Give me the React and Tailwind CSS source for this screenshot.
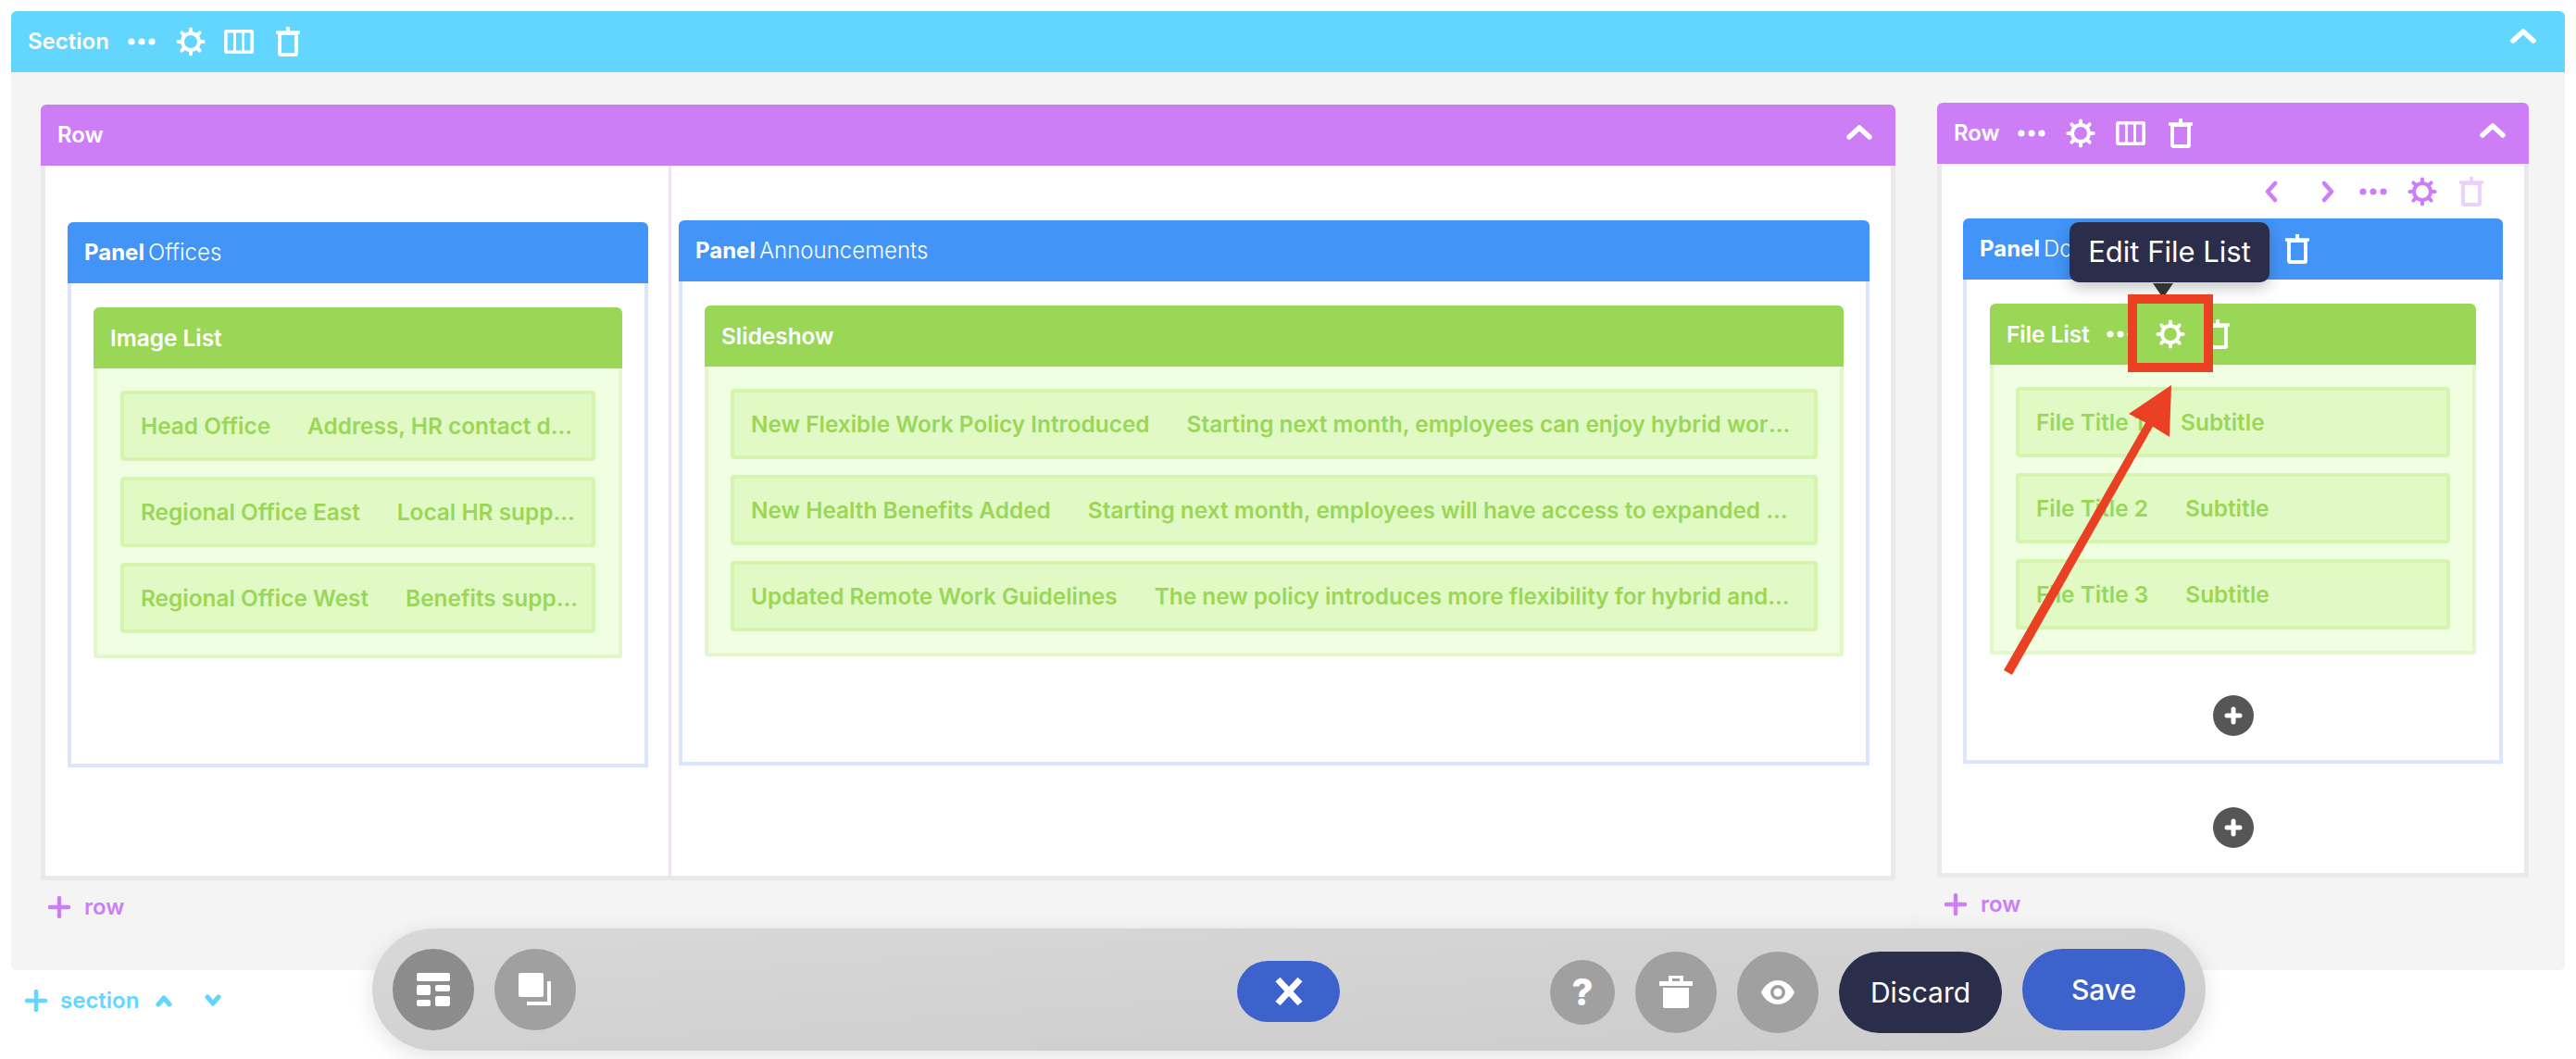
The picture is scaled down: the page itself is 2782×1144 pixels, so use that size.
const font = { fontFamily: "Inter, 'Liberation Sans', sans-serif" };

function Gear({ className = "text-white" }) {
  const teeth = [0, 45, 90, 135, 180, 225, 270, 315];
  return (
    <svg viewBox="0 0 32 32" className={`w-[32px] h-[32px] ${className}`} fill="none" stroke="currentColor">
      <circle cx="16" cy="16" r="9" strokeWidth="4" />
      {teeth.map((a) => (
        <line key={a} x1="16" y1="5" x2="16" y2="2.4" strokeWidth="4" strokeLinecap="round" transform={`rotate(${a} 16 16)`} />
      ))}
    </svg>
  );
}

function Columns() {
  return (
    <svg viewBox="0 0 32 26" className="w-[32px] h-[26px] text-white" fill="none" stroke="currentColor" strokeWidth="3.6">
      <rect x="1.8" y="1.8" width="28.4" height="22.4" rx="1" />
      <line x1="11.5" y1="2" x2="11.5" y2="24" strokeWidth="2.8" />
      <line x1="20.5" y1="2" x2="20.5" y2="24" strokeWidth="2.8" />
    </svg>
  );
}

function Trash({ className = "text-white" }) {
  return (
    <svg viewBox="0 0 26 32" className={`w-[26px] h-[32px] ${className}`} fill="none" stroke="currentColor">
      <rect x="4" y="7" width="18" height="23" rx="1" strokeWidth="3.8" />
      <line x1="0.5" y1="6" x2="25.5" y2="6" strokeWidth="3.4" strokeLinecap="round" />
      <line x1="13" y1="1" x2="13" y2="5" strokeWidth="4" strokeLinecap="round" />
    </svg>
  );
}

function Dots({ className = "text-white" }) {
  return (
    <svg viewBox="0 0 30 8" className={`w-[30px] h-[8px] ${className}`} fill="currentColor">
      <circle cx="4" cy="4" r="3.6" />
      <circle cx="15" cy="4" r="3.6" />
      <circle cx="26" cy="4" r="3.6" />
    </svg>
  );
}

function Up() {
  return (
    <svg viewBox="0 0 28 16" className="w-[28px] h-[16px] text-white" fill="none" stroke="currentColor" strokeWidth="5.5" strokeLinecap="round" strokeLinejoin="round">
      <path d="M3 13 L14 3 L25 13" />
    </svg>
  );
}

function Plus({ className }) {
  return (
    <svg viewBox="0 0 24 24" className={`w-[24px] h-[24px] ${className}`} fill="none" stroke="currentColor" strokeWidth="4.4" strokeLinecap="round">
      <path d="M12 2 V22 M2 12 H22" />
    </svg>
  );
}

function Chevron({ d }) {
  return (
    <svg viewBox="0 0 18 14" className="w-[18px] h-[14px] text-[#63d6ff]" fill="none" stroke="currentColor" strokeWidth="5" strokeLinecap="round" strokeLinejoin="round">
      <path d={d} />
    </svg>
  );
}

function SideChevron({ d }) {
  return (
    <svg viewBox="0 0 14 24" className="w-[14px] h-[24px] text-[#cd7ef6]" fill="none" stroke="currentColor" strokeWidth="4.5" strokeLinecap="round" strokeLinejoin="round">
      <path d={d} />
    </svg>
  );
}

function Item({ title, sub, end }) {
  return (
    <div className={`h-[76px] flex items-center rounded-[4px] border-[4px] border-[#d5f4ae] bg-[#e1f9c5] pl-[18px] ${end} text-[24.4px] font-semibold text-[#9bd757] whitespace-nowrap`}>
      <span className="shrink-0">{title}</span>
      <span className="ml-[40px] truncate min-w-0">{sub}</span>
    </div>
  );
}

function Block({ title, items, pad = "px-[24px]", end = "pr-[22px]", children }) {
  return (
    <div>
      <div className="h-[66px] rounded-t-[6px] bg-[#9bd757] flex items-center pl-[18px] text-[24.4px] font-semibold text-white">
        {title}
        {children}
      </div>
      <div className={`border-[4px] border-t-0 border-[#e3f7cd] rounded-b-[4px] bg-[#f0ffe2] ${pad} pt-[24px] pb-[23px] flex flex-col gap-[17px]`}>
        {items.map((it) => (
          <Item key={it[0]} title={it[0]} sub={it[1]} end={end} />
        ))}
      </div>
    </div>
  );
}

function PanelHead({ name, children }) {
  return (
    <div className="h-[66px] rounded-t-[6px] bg-[#4294f8] flex items-center pl-[18px] text-[24px] text-white whitespace-nowrap">
      <span className="font-bold">Panel</span>
      <span className="ml-[4px] font-light">{name}</span>
      {children}
    </div>
  );
}

function AddCircle() {
  return (
    <div className="w-[44px] h-[44px] rounded-full bg-[#565656] flex items-center justify-center">
      <svg viewBox="0 0 20 20" className="w-[20px] h-[20px] text-white" fill="none" stroke="currentColor" strokeWidth="5" strokeLinecap="round">
        <path d="M10 3 V17 M3 10 H17" />
      </svg>
    </div>
  );
}

function AddRow() {
  return (
    <div className="flex items-center gap-[15px] h-[58px] pl-[8px] text-[24px] font-semibold text-[#cd7ef6]">
      <Plus className="text-[#cd7ef6]" />
      <span>row</span>
    </div>
  );
}

export default function App() {
  return (
    <div style={font} className="relative w-[2782px] h-[1144px] overflow-hidden bg-white">
      <div className="pt-[12px] px-[12px]">
        {/* Section */}
        <div className="h-[66px] rounded-t-[6px] bg-[#63d6ff] flex items-center pl-[18px] pr-[31px] text-[24px] font-semibold text-white">
          <span>Section</span>
          <Dots className="ml-[20px] text-white" />
          <div className="ml-[22px]"><Gear /></div>
          <div className="ml-[20px]"><Columns /></div>
          <div className="ml-[24px]"><Trash /></div>
          <div className="ml-auto -mt-[12px]"><Up /></div>
        </div>
        <div className="h-[970px] flex bg-[#f4f4f4] rounded-b-[6px]">
          {/* left column */}
          <div className="w-[2059px] shrink-0 pl-[32px] pr-[19px] pt-[35px] border-r-[5px] border-[#f0f4f6]">
            <div className="h-[66px] rounded-t-[6px] bg-[#cd7ef6] flex items-center pl-[18px] pr-[25px] text-[24px] font-semibold text-white">
              <span>Row</span>
              <div className="ml-auto -mt-[6px]"><Up /></div>
            </div>
            <div className="h-[772px] flex border-[5px] border-t-0 border-[#e9e9e9] bg-white rounded-b-[4px]">
              <div className="w-[676px] shrink-0 border-r-[3px] border-[#efe3fa] pl-[24px] pr-[22px] pt-[61px]">
                <PanelHead name="Offices" />
                <div className="h-[523px] border-[4px] border-t-0 border-[#d9e6fb] px-[24px] pt-[26px] bg-white">
                  <Block
                    title="Image List"
                    pad="px-[25px]"
                    end="pr-[15px]"
                    items={[
                      ["Head Office", "Address, HR contact details and office hours"],
                      ["Regional Office East", "Local HR support and benefits"],
                      ["Regional Office West", "Benefits support and local HR"],
                    ]}
                  />
                </div>
              </div>
              <div className="flex-1 min-w-0 pl-[8px] pr-[23px] pt-[59px]">
                <PanelHead name="Announcements" />
                <div className="h-[523px] border-[4px] border-t-0 border-[#d9e6fb] px-[24px] pt-[26px] bg-white">
                  <Block
                    title="Slideshow"
                    items={[
                      ["New Flexible Work Policy Introduced", "Starting next month, employees can enjoy hybrid work arrangements from home and office"],
                      ["New Health Benefits Added", "Starting next month, employees will have access to expanded health and dental coverage"],
                      ["Updated Remote Work Guidelines", "The new policy introduces more flexibility for hybrid and remote work across all teams"],
                    ]}
                  />
                </div>
              </div>
            </div>
            <AddRow />
          </div>

          {/* right column */}
          <div className="flex-1 min-w-0 pl-[21px] pr-[39px] pt-[33px]">
            <div className="h-[66px] rounded-t-[6px] bg-[#cd7ef6] flex items-center pl-[18px] pr-[25px] text-[24px] font-semibold text-white">
              <span>Row</span>
              <Dots className="ml-[19px] text-white" />
              <div className="ml-[22px]"><Gear /></div>
              <div className="ml-[22px]"><Columns /></div>
              <div className="ml-[25px]"><Trash /></div>
              <div className="ml-auto -mt-[6px]"><Up /></div>
            </div>
            <div className="h-[771px] border-[5px] border-t-0 border-[#e9e9e9] bg-white rounded-b-[4px] px-[23px]">
              <div className="h-[59px] flex items-center pr-[21px]">
                <div className="ml-auto"><SideChevron d="M11 3 L3 12 L11 21" /></div>
                <div className="ml-[47px]"><SideChevron d="M3 3 L11 12 L3 21" /></div>
                <Dots className="ml-[27px] text-[#cd7ef6]" />
                <div className="ml-[22px]"><Gear className="text-[#cd7ef6]" /></div>
                <div className="ml-[24px]"><Trash className="text-[#ead0fb]" /></div>
              </div>
              <PanelHead name="Documents">
                <div className="ml-[134px]"><Trash /></div>
              </PanelHead>
              <div className="h-[523px] border-[4px] border-t-0 border-[#d9e6fb] px-[25px] pt-[26px] bg-white">
                <Block
                  title="File List"
                  items={[
                    ["File Title 1", "Subtitle"],
                    ["File Title 2", "Subtitle"],
                    ["File Title 3", "Subtitle"],
                  ]}
                >
                  <Dots className="ml-[18px] text-white" />
                  <div className="ml-[23px]"><Gear /></div>
                  <div className="ml-[22px]"><Trash /></div>
                </Block>
                <div className="mt-[44px] flex justify-center"><AddCircle /></div>
              </div>
              <div className="mt-[47px] flex justify-center"><AddCircle /></div>
            </div>
            <AddRow />
          </div>
        </div>

        {/* add section */}
        <div className="h-[66px] flex items-center pl-[15px] text-[24px] font-semibold text-[#63d6ff]">
          <Plus className="text-[#63d6ff]" />
          <span className="ml-[14px]">section</span>
          <div className="ml-[18px]"><Chevron d="M3 11 L9 4 L15 11" /></div>
          <div className="ml-[35px]"><Chevron d="M3 3 L9 10 L15 3" /></div>
        </div>
      </div>

      {/* tooltip */}
      <div className="absolute left-[2235px] top-[240px] w-[216px] h-[65px] rounded-[10px] bg-[#2b2e4a] shadow-[0_6px_16px_rgba(0,0,0,0.22)] flex items-center justify-center text-[31px] text-white whitespace-nowrap">
        Edit File List
      </div>
      <div className="absolute left-[2325px] top-[306px] w-0 h-0 border-x-[11px] border-x-transparent border-t-[16px] border-t-[#333333]" />

      {/* annotation */}
      <div className="absolute left-[2298px] top-[318px] w-[92px] h-[84px] border-[10px] border-[#ea4125]" />
      <svg className="absolute left-0 top-0 w-[2782px] h-[1144px] pointer-events-none" viewBox="0 0 2782 1144">
        <polygon points="2345,416 2299,447 2322,459 2343,472" fill="#ea4125" />
        <polygon points="2164,724 2318,455 2326,459 2173,729" fill="#ea4125" />
      </svg>

      {/* bottom bar */}
      <div className="absolute left-[402px] top-[1003px] w-[1980px] h-[132px] rounded-full bg-gradient-to-br from-[#d8d8d8] to-[#cccccc] shadow-[0_6px_24px_rgba(0,0,0,0.12)] flex items-center pl-[22px]">
        <div className="w-[88px] h-[88px] rounded-full bg-[#8c8c8c] flex items-center justify-center">
          <svg viewBox="0 0 36 36" className="w-[36px] h-[36px] text-white" fill="currentColor">
            <rect x="0" y="0" width="36" height="9" rx="2" />
            <rect x="0" y="13" width="15" height="11" rx="2" />
            <rect x="20" y="13" width="16" height="7" rx="2" />
            <rect x="0" y="29" width="15" height="7" rx="2" />
            <rect x="20" y="25" width="16" height="11" rx="2" />
          </svg>
        </div>
        <div className="ml-[22px] w-[88px] h-[88px] rounded-full bg-[#a0a0a0] flex items-center justify-center">
          <svg viewBox="0 0 36 36" className="w-[36px] h-[36px] text-white" fill="currentColor">
            <rect x="0" y="0" width="27" height="26" rx="2" />
            <path d="M31 9 H35 V35 H9 V31 H31 Z" />
          </svg>
        </div>
        <div className="ml-[714px] mt-[4px] w-[111px] h-[66px] rounded-full bg-[#3d62cc] flex items-center justify-center">
          <svg viewBox="0 0 32 32" className="w-[34px] h-[32px] text-white" fill="none" stroke="currentColor" strokeWidth="7">
            <path d="M4 3 L28 29 M28 3 L4 29" />
          </svg>
        </div>
        <div className="ml-[227px] mt-[6px] w-[70px] h-[70px] rounded-full bg-[#a0a0a0] flex items-center justify-center text-[40px] font-extrabold text-white">?</div>
        <div className="ml-[22px] mt-[6px] w-[88px] h-[88px] rounded-full bg-[#a0a0a0] flex items-center justify-center">
          <svg viewBox="0 0 36 36" className="w-[36px] h-[36px] text-white" fill="currentColor">
            <path d="M10 0 H26 V6 H36 V11 H0 V6 H10 Z M14 3 V6 H22 V3 Z" fillRule="evenodd" />
            <path d="M4 13 H32 V33 Q32 35 30 35 H6 Q4 35 4 33 Z" />
          </svg>
        </div>
        <div className="ml-[22px] mt-[6px] w-[88px] h-[88px] rounded-full bg-[#a0a0a0] flex items-center justify-center">
          <svg viewBox="0 0 36 26" className="w-[36px] h-[26px] text-white" fill="currentColor">
            <path fillRule="evenodd" d="M18 0 C26 0 33 6 36 13 C33 20 26 26 18 26 C10 26 3 20 0 13 C3 6 10 0 18 0 Z M18 5 A8 8 0 1 0 18 21 A8 8 0 1 0 18 5 Z" />
            <circle cx="18" cy="13" r="4.5" />
          </svg>
        </div>
        <div className="ml-[22px] mt-[6px] w-[176px] h-[88px] rounded-full bg-[#2b2e4a] flex items-center justify-center text-[30px] text-white">Discard</div>
        <div className="ml-[22px] w-[176px] h-[88px] rounded-full bg-[#3d62cc] flex items-center justify-center text-[30px] font-medium text-white">Save</div>
      </div>
    </div>
  );
}
